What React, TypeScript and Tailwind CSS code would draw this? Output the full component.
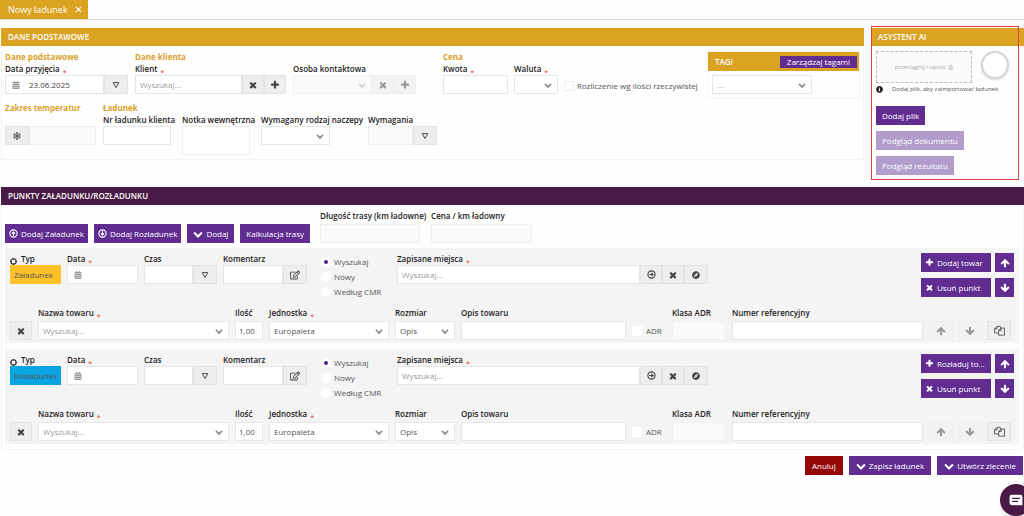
import { useId, type ReactNode } from 'react';
import clsx from 'clsx';
import {
  FaCalendarAlt,
  FaCompass,
  FaInfoCircle,
  FaRegEdit,
  FaRegFileAlt,
  FaRegSnowflake,
} from 'react-icons/fa';

const ICONS = {
  times:
    'M1490 1322q0 40-28 68l-136 136q-28 28-68 28t-68-28l-294-294-294 294q-28 28-68 28t-68-28l-136-136q-28-28-28-68t28-68l294-294-294-294q-28-28-28-68t28-68l136-136q28-28 68-28t68 28l294 294 294-294q28-28 68-28t68 28l136 136q28 28 28 68t-28 68l-294 294 294 294q28 28 28 68z',
  plus: 'M1600 736v192q0 40-28 68t-68 28h-416v416q0 40-28 68t-68 28h-192q-40 0-68-28t-28-68v-416h-416q-40 0-68-28t-28-68v-192q0-40 28-68t68-28h416v-416q0-40 28-68t68-28h192q40 0 68 28t28 68v416h416q40 0 68 28t28 68z',
  up: 'M1675 971q0 51-37 90l-75 75q-38 38-91 38-54 0-90-38l-294-293v704q0 52-37.5 84.5t-90.5 32.5h-128q-53 0-90.5-32.5t-37.5-84.5v-704l-294 293q-36 38-90 38t-90-38l-75-75q-38-38-38-90 0-53 38-91l651-651q35-37 90-37 54 0 91 37l651 651q37 39 37 91z',
  down: 'M1675 832q0 53-37 90l-651 652q-39 37-91 37-53 0-90-37l-651-652q-38-36-38-90 0-53 38-91l74-75q39-37 91-37 53 0 90 37l294 294v-704q0-52 38-90t90-38h128q52 0 90 38t38 90v704l294-294q37-37 90-37 52 0 91 37l75 75q37 39 37 91z',
  chevron:
    'M1683 808l-742 741q-19 19-45 19t-45-19l-742-741q-19-19-19-45.5t19-45.5l166-165q19-19 45-19t45 19l531 531 531-531q19-19 45-19t45 19l166 165q19 19 19 45.5t-19 45.5z',
};

function Icon({ name, className = 'size-[10px]' }: { name: keyof typeof ICONS; className?: string }) {
  return (
    <svg viewBox="0 0 1792 1792" fill="currentColor" className={clsx('shrink-0', className)}>
      <path d={ICONS[name]} />
    </svg>
  );
}

function Triangle() {
  return (
    <svg viewBox="0 0 10 10" className="size-[8px]" fill="none" stroke="currentColor" strokeWidth="1.2">
      <path d="M1.5 2h7L5 8.2z" />
    </svg>
  );
}

// circle with an arrow inside, rotated for each use
function CircleArrow({ className }: { className?: string }) {
  return (
    <svg viewBox="0 0 20 20" className={clsx('shrink-0', className)} fill="none" stroke="currentColor" strokeWidth="2.5">
      <circle cx="10" cy="10" r="8" />
      <path d="M5 10h8M10 6.5l3.5 3.5-3.5 3.5" />
    </svg>
  );
}

function Files() {
  return (
    <svg viewBox="0 0 20 20" className="size-[11px]" fill="none" stroke="currentColor" strokeWidth="1.5" strokeLinejoin="round">
      <path d="M8.5 14.5H1V7l4.5-4.5h6V6" />
      <path d="M5.5 2.5V7H1" />
      <path d="M13 5.5h6v13H8.5V10z" />
      <path d="M13 5.5V10H8.5" />
    </svg>
  );
}

function Label({ id, required, children }: { id?: string; required?: boolean; children: ReactNode }) {
  return (
    <label htmlFor={id} className="block h-3 whitespace-nowrap text-[8px] font-semibold leading-3 text-[#222]">
      {children}
      {required && <span className="ml-[3px] align-sub text-[7px] leading-none text-[#f0605a]">*</span>}
    </label>
  );
}

type FieldProps = {
  label: string;
  required?: boolean;
  className?: string;
  gap?: boolean;
  children: (id: string) => ReactNode;
};

function Field({ label, required, className, gap, children }: FieldProps) {
  const id = useId();
  return (
    <div className={clsx('flex flex-col', gap && 'gap-[2px]', className)}>
      <Label id={id} required={required}>{label}</Label>
      <div className="flex">{children(id)}</div>
    </div>
  );
}

const box = 'block h-[19px] w-full min-w-0 rounded-none border text-[8px] text-[#555] outline-none placeholder:text-[#999]';
const boxOn = 'border-[#e6e6e6] bg-white';
const boxOff = 'border-[#f0f0f0] bg-[#fafafa]';

function Input({ id, value, placeholder, disabled, className = 'px-1' }: {
  id: string; value?: string; placeholder?: string; disabled?: boolean; className?: string;
}) {
  return (
    <input
      id={id}
      type="text"
      defaultValue={value}
      placeholder={placeholder}
      disabled={disabled}
      className={clsx(box, disabled ? boxOff : boxOn, className)}
    />
  );
}

function DateInput({ id, value }: { id: string; value?: string }) {
  return (
    <div className="flex h-[19px] w-full min-w-0 items-center border border-[#e6e6e6] bg-white pl-[6px]">
      <FaCalendarAlt className="size-2 shrink-0 text-[#999]" />
      <input id={id} type="text" defaultValue={value} className="w-full min-w-0 pl-[9px] text-[8px] text-[#444] outline-none" />
    </div>
  );
}

function Select({ id, label, value = '', disabled, muted }: {
  id?: string; label?: string; value?: string; disabled?: boolean; muted?: boolean;
}) {
  return (
    <div className="relative w-full min-w-0">
      <select
        id={id}
        aria-label={label}
        disabled={disabled}
        className={clsx(box, 'appearance-none pl-1', disabled ? boxOff : boxOn, muted && 'text-[#999]')}
      >
        <option>{value}</option>
      </select>
      <Icon
        name="chevron"
        className={clsx('pointer-events-none absolute right-[6px] top-[6px] size-[8px]', disabled ? 'text-[#ccc]' : 'text-[#888]')}
      />
    </div>
  );
}

function Addon({ label, disabled, className = 'w-[22px]', children }: {
  label: string; disabled?: boolean; className?: string; children: ReactNode;
}) {
  return (
    <button
      type="button"
      aria-label={label}
      disabled={disabled}
      className={clsx(
        'flex h-[19px] shrink-0 items-center justify-center border',
        disabled ? 'border-[#eee] bg-[#f2f2f2] text-[#999]' : 'border-[#e3e3e3] bg-[#eee] text-[#444]',
        className,
      )}
    >
      {children}
    </button>
  );
}

function Button({ className, disabled, color, label, children }: {
  className?: string; disabled?: boolean; color?: string; label?: string; children: ReactNode;
}) {
  return (
    <button
      type="button"
      aria-label={label}
      disabled={disabled}
      className={clsx(
        'flex h-[19px] shrink-0 items-center gap-[3px] whitespace-nowrap text-[8px] font-medium text-white',
        color ?? (disabled ? 'bg-[#b19ccb]' : 'bg-[#622d91]'),
        className,
      )}
    >
      {children}
    </button>
  );
}

function GroupTitle({ children }: { children?: ReactNode }) {
  return <h3 className="h-3 whitespace-nowrap text-[8px] font-bold leading-3 text-[#dba12a]">{children}</h3>;
}

function Group({ title, className, children }: { title?: string; className?: string; children: ReactNode }) {
  return (
    <div className={clsx('flex flex-col', className)}>
      <GroupTitle>{title}</GroupTitle>
      <div className="flex">{children}</div>
    </div>
  );
}

function PanelHeader({ className, children }: { className: string; children: ReactNode }) {
  return (
    <h2 className={clsx('flex h-[18px] items-center px-[7px] text-[8px] font-semibold text-white', className)}>{children}</h2>
  );
}

function BasicData() {
  return (
    <section className="min-w-0 flex-1">
      <PanelHeader className="bg-[#daa321]">DANE PODSTAWOWE</PanelHeader>
      <div className="flex items-start justify-between border border-t-0 border-[#f3f3f3] pb-1 pl-[3px] pr-[3px] pt-[5px]">
        <div className="flex flex-col gap-2">
          <div className="flex items-end">
            <Group title="Dane podstawowe" className="w-[123px]">
              <Field label="Data przyjęcia" required className="w-full">
                {(id) => (
                  <>
                    <DateInput id={id} value="23.06.2025" />
                    <Addon label="Wybierz datę" className="w-6"><Triangle /></Addon>
                  </>
                )}
              </Field>
            </Group>
            <Group title="Dane klienta" className="ml-[7px] w-[281px]">
              <Field label="Klient" required className="w-[151px]">
                {(id) => (
                  <>
                    <Input id={id} placeholder="Wyszukaj..." />
                    <Addon label="Wyczyść klienta"><Icon name="times" /></Addon>
                    <Addon label="Dodaj klienta"><Icon name="plus" /></Addon>
                  </>
                )}
              </Field>
              <Field label="Osoba kontaktowa" className="ml-[7px] w-[123px]">
                {(id) => (
                  <>
                    <Select id={id} disabled />
                    <Addon label="Wyczyść osobę" disabled><Icon name="times" /></Addon>
                    <Addon label="Dodaj osobę" disabled><Icon name="plus" /></Addon>
                  </>
                )}
              </Field>
            </Group>
            <Group title="Cena" className="ml-[27px]">
              <Field label="Kwota" required className="w-[65px]">{(id) => <Input id={id} />}</Field>
              <Field label="Waluta" required className="ml-[6px] w-11">{(id) => <Select id={id} />}</Field>
            </Group>
            <label className="ml-[6px] flex h-[19px] items-center gap-[3px] whitespace-nowrap pt-[2px] text-[8px] text-[#555]">
              <input type="checkbox" className="size-[10px] appearance-none border border-[#eee] bg-white" />
              Rozliczenie wg ilości rzeczywistej
            </label>
          </div>
          <div className="flex items-start">
            <div className="w-[91px]">
              <GroupTitle>Zakres temperatur</GroupTitle>
              <div className="mt-3 flex">
                <Addon label="Temperatura" className="w-6"><FaRegSnowflake className="size-[8px]" /></Addon>
                <input aria-label="Zakres temperatur" disabled className={clsx(box, boxOff)} />
              </div>
            </div>
            <Group title="Ładunek" className="ml-[7px]">
              <Field label="Nr ładunku klienta" className="w-[68px]">{(id) => <Input id={id} />}</Field>
              <Field label="Notka wewnętrzna" className="ml-[11px] w-[68px]">
                {(id) => <textarea id={id} className="block h-[29px] w-full resize-none border border-[#eee] bg-white text-[8px] outline-none" />}
              </Field>
              <Field label="Wymagany rodzaj naczepy" className="ml-[11px] w-[69px]">{(id) => <Select id={id} />}</Field>
              <Field label="Wymagania" className="ml-[38px] w-[69px]">
                {(id) => (
                  <>
                    <Input id={id} disabled />
                    <Addon label="Wybierz wymagania" className="w-6"><Triangle /></Addon>
                  </>
                )}
              </Field>
            </Group>
          </div>
        </div>
        <div className="w-[153px] shrink-0 border border-[#f3f3f3]">
          <div className="flex h-[19px] items-center justify-between bg-[#daa321] pl-[7px] pr-[2px]">
            <h3 className="text-[8px] font-semibold text-white">TAGI</h3>
            <button type="button" className="h-3 bg-[#622d91] px-[7px] text-[8px] font-medium leading-3 text-white">
              Zarządzaj tagami
            </button>
          </div>
          <div className="w-[108px] px-1 py-1">
            <Select label="Tagi" value="..." muted />
          </div>
        </div>
      </div>
    </section>
  );
}

function Assistant() {
  return (
    <aside className="relative w-[153px] shrink-0 pb-[5px]">
      <PanelHeader className="bg-[#daa321]">ASYSTENT AI</PanelHeader>
      <div className="flex flex-col items-start pl-[5px] pt-[5px]">
        <div className="flex items-start gap-[9px]">
          <div className="flex h-8 w-24 items-center justify-center gap-[2px] border border-dashed border-[#bbb] bg-[#fafafa] text-[6px] text-[#aaa]">
            przeciągnij i upuść <FaRegFileAlt className="size-[5px]" />
          </div>
          <div className="size-7 rounded-full border-2 border-[#d5d5d5] bg-white shadow-sm" />
        </div>
        <p className="flex h-3 items-center gap-[9px] whitespace-nowrap text-[6px] text-[#555]">
          <FaInfoCircle className="size-[7px] text-[#222]" />
          Dodaj plik, aby zaimportować ładunek
        </p>
        <div className="mt-[11px] flex flex-col items-start gap-[6px]">
          <Button className="px-[6px]">Dodaj plik</Button>
          <Button className="px-[6px]" disabled>Podgląd dokumentu</Button>
          <Button className="px-[6px]" disabled>Podgląd rezultatu</Button>
        </div>
      </div>
      {/* highlight frame over the panel */}
      <div className="pointer-events-none absolute -top-[2px] bottom-0 left-0 right-[5px] border border-[#e0403c]" />
    </aside>
  );
}

type Point = { type: string; typeClass: string; addLabel: string };

const points: Point[] = [
  { type: 'Załadunek', typeClass: 'bg-[#fdc228]', addLabel: 'Dodaj towar' },
  { type: 'Rozładunek', typeClass: 'bg-[#0ba4e3]', addLabel: 'Rozładuj to...' },
];

function PointCard({ type, typeClass, addLabel }: Point) {
  const name = useId();
  return (
    <article className="flex flex-col gap-2 bg-[#f4f4f4] pb-[3px] pl-[5px] pr-[5px] pt-[5px]">
      <div className="flex items-start">
        <div className="w-[51px]">
          <div className="flex h-3 items-center gap-1">
            <svg viewBox="0 0 10 10" className="mt-1 size-[7px]" fill="none" stroke="#333" strokeWidth="1.5">
              <circle cx="5" cy="5" r="3.8" />
              <path d="M5 0v2.600M5 7.400V10M0 5h2.600M7.400 5H10" />
            </svg>
            <Label>Typ</Label>
          </div>
          <div className={clsx('flex h-[19px] items-center pl-1 text-[8px] text-[#555]', typeClass)}>{type}</div>
        </div>
        <Field label="Data" required className="ml-[6px] w-[71px]">{(id) => <DateInput id={id} />}</Field>
        <Field label="Czas" className="ml-[6px] w-[73px]">
          {(id) => (
            <>
              <Input id={id} />
              <Addon label="Wybierz czas" className="w-6"><Triangle /></Addon>
            </>
          )}
        </Field>
        <Field label="Komentarz" className="ml-[6px] w-[84px]">
          {(id) => (
            <>
              <Input id={id} />
              <Addon label="Edytuj komentarz" className="w-6"><FaRegEdit className="size-[10px]" /></Addon>
            </>
          )}
        </Field>
        <fieldset className="ml-[14px] flex w-[76px] flex-col pt-px">
          {['Wyszukaj', 'Nowy', 'Według CMR'].map((option, i) => (
            <label key={option} className="flex h-[15px] items-center gap-[3px] whitespace-nowrap text-[8px] text-[#555]">
              <input
                type="radio"
                name={name}
                defaultChecked={i === 0}
                className="size-[10px] appearance-none rounded-full border-3 border-white bg-white checked:bg-[#4b1f85]"
              />
              {option}
            </label>
          ))}
        </fieldset>
        <Field label="Zapisane miejsca" required className="min-w-0 max-w-[311px] flex-1">
          {(id) => (
            <>
              <Input id={id} placeholder="Wyszukaj..." />
              <Addon label="Przejdź"><CircleArrow className="size-[9px]" /></Addon>
              <Addon label="Wyczyść miejsce"><Icon name="times" /></Addon>
              <Addon label="Mapa" className="w-6"><FaCompass className="size-2" /></Addon>
            </>
          )}
        </Field>
        <div className="ml-auto grid grid-cols-[70px_19px] gap-x-[4px] gap-y-[6px]">
          <Button className="px-1"><Icon name="plus" className="size-[9px]" />{addLabel}</Button>
          <Button className="justify-center" label="Przesuń w górę"><Icon name="up" /></Button>
          <Button className="px-1"><Icon name="times" className="size-[9px]" />Usuń punkt</Button>
          <Button className="justify-center" label="Przesuń w dół"><Icon name="down" /></Button>
        </div>
      </div>
      <div className="flex items-end gap-[6px] pr-[3px]">
        <Addon label="Usuń towar"><Icon name="times" /></Addon>
        <Field label="Nazwa towaru" required gap className="w-[191px]">
          {(id) => (
            <div className="relative w-full">
              <Input id={id} placeholder="Wyszukaj..." />
              <Icon name="chevron" className="pointer-events-none absolute right-[6px] top-[6px] size-[8px] text-[#888]" />
            </div>
          )}
        </Field>
        <Field label="Ilość" gap className="w-7">{(id) => <Input id={id} value="1,00" className="px-[3px]" />}</Field>
        <Field label="Jednostka" required gap className="w-[120px]">{(id) => <Select id={id} value="Europaleta" />}</Field>
        <Field label="Rozmiar" gap className="w-[60px]">{(id) => <Select id={id} value="Opis" />}</Field>
        <Field label="Opis towaru" gap className="w-[165px]">{(id) => <Input id={id} />}</Field>
        <label className="flex h-[19px] w-[34px] items-center gap-1 text-[8px] text-[#555]">
          <input type="checkbox" className="size-[10px] appearance-none bg-white" />
          ADR
        </label>
        <Field label="Klasa ADR" gap className="w-[54px]">{(id) => <Input id={id} disabled />}</Field>
        <Field label="Numer referencyjny" gap className="min-w-0 flex-1">{(id) => <Input id={id} />}</Field>
        <div className="flex gap-[5px]">
          <Addon label="W górę" className="w-6" disabled><Icon name="up" /></Addon>
          <Addon label="W dół" className="w-6" disabled><Icon name="down" /></Addon>
          <Addon label="Kopiuj" className="w-6"><Files /></Addon>
        </div>
      </div>
    </article>
  );
}

function Points() {
  return (
    <section className="mt-[7px]">
      <PanelHeader className="bg-[#481a45]">PUNKTY ZAŁADUNKU/ROZŁADUNKU</PanelHeader>
      <div className="border border-t-0 border-[#f3f3f3] pb-[5px] pl-[3px] pr-1 pt-[5px]">
        <div className="flex items-end">
          <div className="flex gap-[6px]">
            <Button className="px-1"><CircleArrow className="size-[9px] -rotate-90" />Dodaj Załadunek</Button>
            <Button className="px-1"><CircleArrow className="size-[9px] rotate-90" />Dodaj Rozładunek</Button>
            <Button className="px-[6px]"><Icon name="chevron" />Dodaj</Button>
            <Button className="px-[6px]">Kalkulacja trasy</Button>
          </div>
          <Field label="Długość trasy (km ładowne)" gap className="ml-[10px] w-[100px]">{(id) => <Input id={id} disabled />}</Field>
          <Field label="Cena / km ładowny" gap className="ml-[11px] w-[101px]">{(id) => <Input id={id} disabled />}</Field>
        </div>
        <div className="mt-[5px] flex flex-col gap-[6px]">
          {points.map((point) => (
            <PointCard key={point.type} {...point} />
          ))}
        </div>
      </div>
    </section>
  );
}

export default function App() {
  return (
    <div className="min-h-screen overflow-x-clip bg-[#fefefe] font-['Open_Sans','Noto_Sans',sans-serif]">
      <nav className="flex border-b border-[#dedede]">
        <div className="flex h-[19px] items-center gap-[7px] bg-[#daa321] pl-2 pr-[6px] text-[9px] text-white">
          Nowy ładunek
          <button type="button" aria-label="Zamknij">
            <svg viewBox="0 0 8 8" className="size-[7px]" stroke="currentColor" strokeWidth="1.2">
              <path d="M1 1l6 6M7 1L1 7" />
            </svg>
          </button>
        </div>
      </nav>
      <main className="pl-px pt-2">
        <div className="flex items-start gap-[7px]">
          <BasicData />
          <Assistant />
        </div>
        <Points />
        <footer className="mt-[6px] flex justify-end gap-[6px] pr-px">
          <Button className="px-[7px]" color="bg-[#930707]">Anuluj</Button>
          <Button className="px-[7px]"><Icon name="chevron" />Zapisz ładunek</Button>
          <Button className="px-[7px]"><Icon name="chevron" />Utwórz zlecenie</Button>
        </footer>
      </main>
      <button
        type="button"
        aria-label="Czat"
        className="fixed -right-2 bottom-0 flex size-8 items-center justify-center rounded-full bg-[#481a45] text-white shadow-md"
      >
        <svg viewBox="0 0 16 14" className="h-[12px] w-[14px]">
          <path d="M3 1h10a2.5 2.5 0 0 1 2.5 2.5V13H3A2.5 2.5 0 0 1 .5 10.5v-7A2.5 2.5 0 0 1 3 1z" fill="currentColor" />
          <path d="M4 5.2h8M4 8.5h6" stroke="#481a45" strokeWidth="1.4" strokeLinecap="round" />
        </svg>
      </button>
    </div>
  );
}
